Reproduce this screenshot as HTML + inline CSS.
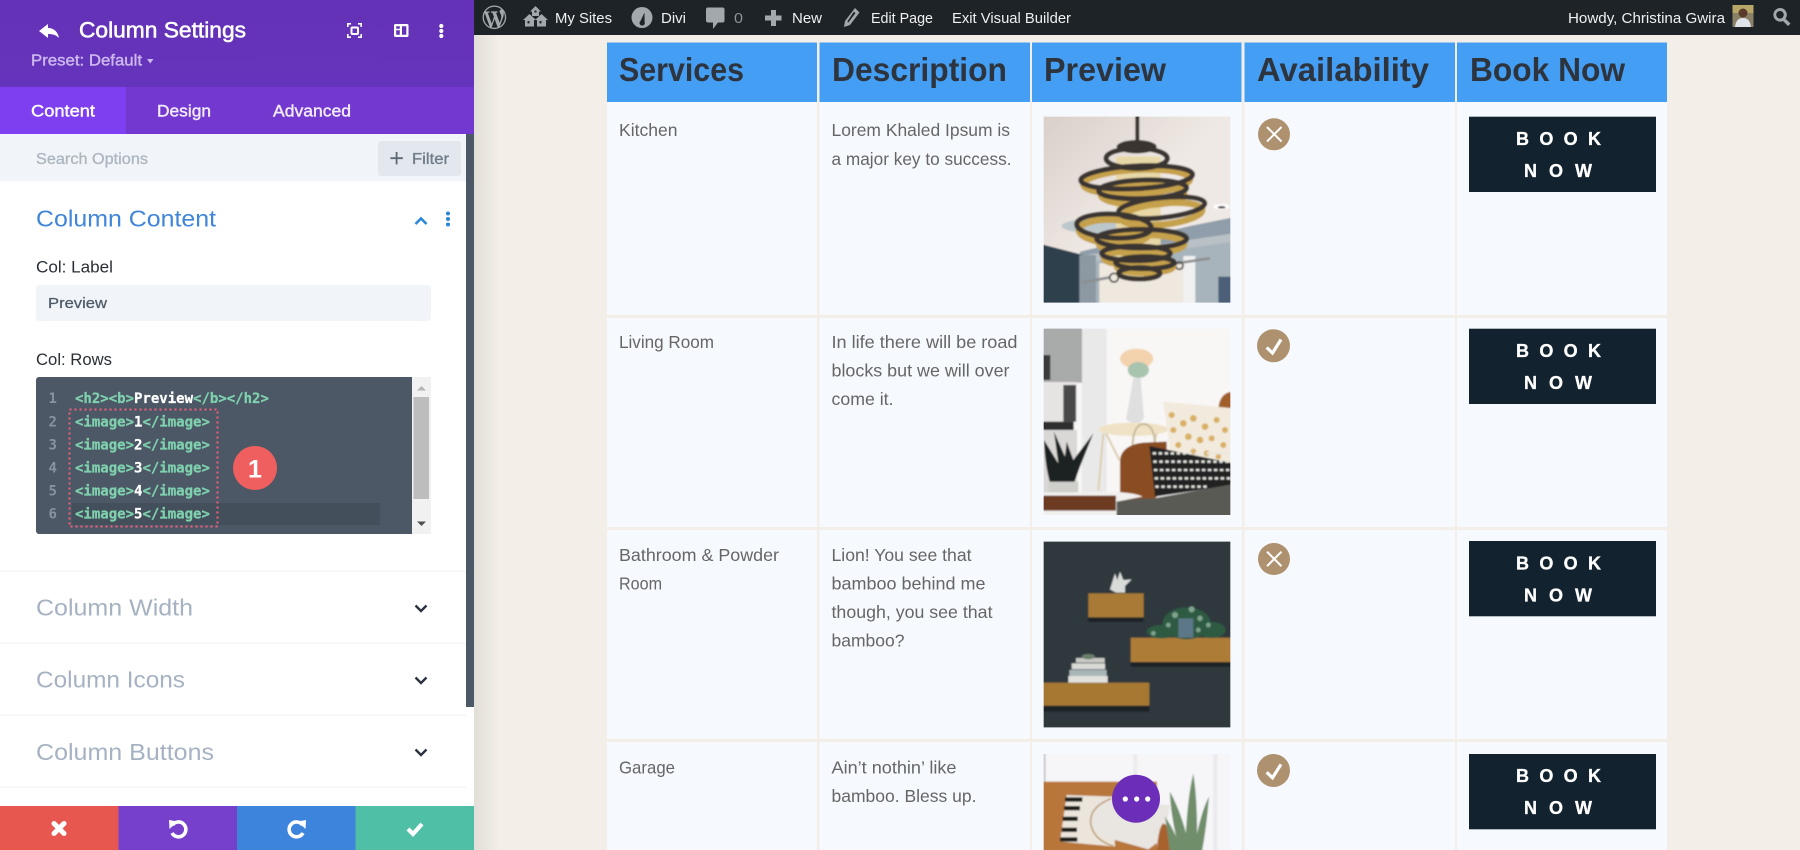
<!DOCTYPE html>
<html lang="en">
<head>
<meta charset="utf-8">
<title>Column Settings</title>
<style>
html,body{margin:0;padding:0;width:1800px;height:850px;overflow:hidden;background:#f3efe8}
svg{display:block}
text{font-family:"Liberation Sans",Arial,sans-serif}
.t{font-size:22.5px;fill:#fff;stroke:#fff;stroke-width:.55}
.tab{font-size:16.5px;fill:#fff;stroke:#fff;stroke-width:.4}
.sec{font-size:23.5px;fill:#a6b2c2}
.lab{font-size:16.5px;fill:#2a2f36}
.ab{font-size:14.5px;fill:#eef0f1}
.th{font-weight:bold;font-size:33px;fill:#2d343e}
.td{font-size:17.5px;fill:#666}
.bk{font-weight:bold;font-size:18px;fill:#fff;stroke:#fff;stroke-width:.3}
.code{font-family:"DejaVu Sans Mono","Liberation Mono",monospace;font-size:14px;font-weight:bold;fill:#7fd1ae;stroke:#7fd1ae;stroke-width:.25}
.code tspan{fill:#fff;stroke:#fff}
.ln{font-family:"DejaVu Sans Mono","Liberation Mono",monospace;font-size:14px;font-weight:bold;fill:#8793a3}
</style>
</head>
<body>
<svg xmlns="http://www.w3.org/2000/svg" width="1800" height="850" viewBox="0 0 1800 850">
<defs>
<linearGradient id="shadow" x1="0" x2="1" y1="0" y2="0"><stop offset="0" stop-color="#000" stop-opacity=".07"/><stop offset="1" stop-color="#000" stop-opacity="0"/></linearGradient>
<linearGradient id="hdr" x1="0" x2="0" y1="0" y2="1"><stop offset="0" stop-color="#6332b6"/><stop offset="1" stop-color="#6534bc"/></linearGradient>
<linearGradient id="wall" x1="0" x2="1" y1="0" y2="1"><stop offset="0" stop-color="#d9cfc9"/><stop offset=".5" stop-color="#efe9e5"/><stop offset="1" stop-color="#f0e8e4"/></linearGradient>
<filter id="soft" x="-30%" y="-30%" width="160%" height="160%"><feGaussianBlur stdDeviation="6"/></filter>
<filter id="img" x="-5%" y="-5%" width="110%" height="110%"><feGaussianBlur stdDeviation="2"/></filter>
<clipPath id="c1"><rect x="41" y="50" width="560" height="558"/></clipPath>
<clipPath id="c2"><rect x="41" y="26" width="560" height="559"/></clipPath>
<clipPath id="c3"><rect x="41" y="35" width="560" height="557"/></clipPath>
<clipPath id="c4"><rect x="41" y="42" width="560" height="288"/></clipPath>
</defs>

<!-- page -->
<rect width="1800" height="850" fill="#f3efe8"/>
<rect x="474" y="35" width="26" height="815" fill="url(#shadow)"/>

<!-- table header -->
<g fill="#449ff4">
<rect x="607" y="42.5" width="210" height="59.5"/><rect x="819.5" y="42.5" width="210.5" height="59.5"/><rect x="1032" y="42.5" width="209.5" height="59.5"/><rect x="1244.5" y="42.5" width="210.5" height="59.5"/><rect x="1457" y="42.5" width="210" height="59.5"/>
</g>
<text class="th" x="619" y="81" textLength="125" lengthAdjust="spacingAndGlyphs">Services</text>
<text class="th" x="832" y="81" textLength="175" lengthAdjust="spacingAndGlyphs">Description</text>
<text class="th" x="1044" y="81" textLength="122" lengthAdjust="spacingAndGlyphs">Preview</text>
<text class="th" x="1257" y="81" textLength="172" lengthAdjust="spacingAndGlyphs">Availability</text>
<text class="th" x="1470" y="81" textLength="155" lengthAdjust="spacingAndGlyphs">Book Now</text>

<!-- table rows -->
<g fill="#f6f9fd">
<rect x="607" y="102" width="210" height="213"/><rect x="819.5" y="102" width="210.5" height="213"/><rect x="1032" y="102" width="210" height="213"/><rect x="1244.5" y="102" width="210.5" height="213"/><rect x="1457" y="102" width="210" height="213"/>
<rect x="607" y="318" width="210" height="209"/><rect x="819.5" y="318" width="210.5" height="209"/><rect x="1032" y="318" width="210" height="209"/><rect x="1244.5" y="318" width="210.5" height="209"/><rect x="1457" y="318" width="210" height="209"/>
<rect x="607" y="530" width="210" height="209"/><rect x="819.5" y="530" width="210.5" height="209"/><rect x="1032" y="530" width="210" height="209"/><rect x="1244.5" y="530" width="210.5" height="209"/><rect x="1457" y="530" width="210" height="209"/>
<rect x="607" y="742" width="210" height="108"/><rect x="819.5" y="742" width="210.5" height="108"/><rect x="1032" y="742" width="210" height="108"/><rect x="1244.5" y="742" width="210.5" height="108"/><rect x="1457" y="742" width="210" height="108"/>
</g>

<text class="td" x="619" y="136" textLength="58.5" lengthAdjust="spacingAndGlyphs">Kitchen</text>
<text class="td" x="831.5" y="136" textLength="178.5" lengthAdjust="spacingAndGlyphs">Lorem Khaled Ipsum is</text>
<text class="td" x="831.5" y="165" textLength="180" lengthAdjust="spacingAndGlyphs">a major key to success.</text>

<text class="td" x="619" y="348" textLength="95" lengthAdjust="spacingAndGlyphs">Living Room</text>
<text class="td" x="831.5" y="348" textLength="186" lengthAdjust="spacingAndGlyphs">In life there will be road</text>
<text class="td" x="831.5" y="376.5" textLength="178" lengthAdjust="spacingAndGlyphs">blocks but we will over</text>
<text class="td" x="831.5" y="405" textLength="62" lengthAdjust="spacingAndGlyphs">come it.</text>

<text class="td" x="619" y="561" textLength="160" lengthAdjust="spacingAndGlyphs">Bathroom &amp; Powder</text>
<text class="td" x="619" y="589.5" textLength="43" lengthAdjust="spacingAndGlyphs">Room</text>
<text class="td" x="831.5" y="561" textLength="140" lengthAdjust="spacingAndGlyphs">Lion! You see that</text>
<text class="td" x="831.5" y="589.5" textLength="154" lengthAdjust="spacingAndGlyphs">bamboo behind me</text>
<text class="td" x="831.5" y="618" textLength="161" lengthAdjust="spacingAndGlyphs">though, you see that</text>
<text class="td" x="831.5" y="646.5" textLength="73" lengthAdjust="spacingAndGlyphs">bamboo?</text>

<text class="td" x="619" y="773.5" textLength="56" lengthAdjust="spacingAndGlyphs">Garage</text>
<text class="td" x="831.5" y="773.5" textLength="125" lengthAdjust="spacingAndGlyphs">Ain’t nothin’ like</text>
<text class="td" x="831.5" y="802" textLength="145" lengthAdjust="spacingAndGlyphs">bamboo. Bless up.</text>

<!-- image 1 chandelier -->
<g transform="translate(1030 100) scale(.33333)" clip-path="url(#c1)">
<g filter="url(#img)">
<rect x="31" y="40" width="580" height="578" fill="url(#wall)"/>
<ellipse cx="220" cy="378" rx="125" ry="24" fill="#bcc7cc"/>
<path d="M480 378 L610 352 V402 L150 468 V455Z" fill="#8f9eaa"/>
<path d="M150 468 L610 400 V430 L150 495Z" fill="#b9c1c6"/>
<path d="M150 490 L610 425 V618 H150Z" fill="#a8b4bc"/>
<path d="M31 432 L160 465 V618 H31Z" fill="#2f3f4b"/>
<rect x="148" y="465" width="50" height="153" fill="#8c99a3"/>
<rect x="208" y="490" width="255" height="128" fill="#efe8df"/>
<rect x="460" y="468" width="36" height="150" fill="#f0f1f0"/>
<rect x="565" y="530" width="46" height="88" fill="#4c6078"/>
<path d="M155 548 L240 532 M440 490 L540 475" stroke="#8d8f90" stroke-width="8" fill="none"/>
<circle cx="252" cy="533" r="13" fill="none" stroke="#444" stroke-width="5"/><circle cx="448" cy="497" r="11" fill="none" stroke="#444" stroke-width="5"/>
<ellipse cx="575" cy="320" rx="24" ry="8" fill="#fff"/><ellipse cx="575" cy="322" rx="12" ry="3.5" fill="#333"/>
<rect x="316" y="40" width="12" height="90" fill="#3a342f"/>
<path d="M258 170 H392 V530 H258Z" fill="#e8d8a8"/>
<g fill="none" stroke="#c6a14c" stroke-width="20">
<ellipse cx="320" cy="245" rx="160" ry="36" transform="rotate(-3 320 245)"/>
<ellipse cx="338" cy="285" rx="125" ry="30"/>
<ellipse cx="395" cy="342" rx="122" ry="32" transform="rotate(-6 395 342)"/>
<ellipse cx="252" cy="395" rx="105" ry="36" transform="rotate(3 252 395)"/>
<ellipse cx="335" cy="432" rx="128" ry="28"/>
<ellipse cx="318" cy="474" rx="96" ry="22"/>
<ellipse cx="345" cy="500" rx="84" ry="18"/>
</g>
<g fill="none" stroke="#3b3531" stroke-width="15">
<ellipse cx="320" cy="175" rx="92" ry="30"/>
<ellipse cx="320" cy="232" rx="168" ry="34" transform="rotate(-3 320 232)"/>
<ellipse cx="338" cy="268" rx="132" ry="28" transform="rotate(-2 338 268)"/>
<ellipse cx="395" cy="323" rx="130" ry="30" transform="rotate(-6 395 323)"/>
<ellipse cx="252" cy="378" rx="112" ry="36" transform="rotate(3 252 378)"/>
<ellipse cx="335" cy="416" rx="135" ry="28"/>
<ellipse cx="318" cy="460" rx="103" ry="22"/>
<ellipse cx="345" cy="488" rx="88" ry="18"/>
<ellipse cx="328" cy="520" rx="62" ry="17"/>
</g>
<ellipse cx="320" cy="140" rx="60" ry="20" fill="#3a3430"/>
</g>
</g>

<!-- image 2 living room -->
<g transform="translate(1030 320) scale(.33333)" clip-path="url(#c2)">
<g filter="url(#img)">
<rect x="31" y="16" width="580" height="579" fill="#f8f7f6"/>
<rect x="155" y="16" width="75" height="500" fill="#e9e9ea"/>
<rect x="31" y="16" width="125" height="172" fill="#a9abab"/>
<rect x="31" y="105" width="30" height="75" fill="#3a3a3a"/>
<rect x="31" y="186" width="110" height="120" fill="#e6e4e2"/>
<rect x="100" y="195" width="38" height="110" fill="#4a4a4a"/>
<rect x="31" y="305" width="100" height="25" fill="#2d2d2d"/>
<rect x="31" y="330" width="110" height="190" fill="#d9d8d6"/>
<path d="M42 360 L85 430 L72 335 L105 410 L110 365 L130 420 L190 340 L150 440 L130 495 H62 Q45 440 42 360Z" fill="#1f2220"/>
<rect x="55" y="485" width="90" height="32" fill="#cfcfcb"/>
<ellipse cx="320" cy="116" rx="50" ry="30" fill="#f3d3ad"/>
<ellipse cx="325" cy="150" rx="32" ry="24" fill="#a9c4ae"/>
<path d="M310 175 H332 L342 295 Q320 325 288 298Z" fill="#dfdfdf"/>
<ellipse cx="310" cy="328" rx="105" ry="20" fill="#efe2c6"/>
<path d="M220 340 L205 512 M228 340 L268 420 M380 340 L370 380" stroke="#dccfae" stroke-width="6" fill="none"/>
<path d="M308 375 Q310 312 342 312 Q372 315 375 370" stroke="#c8bb9a" stroke-width="6" fill="none"/>
<path d="M270 420 Q275 375 340 368 L410 365 V500 L370 540 H270Z" fill="#8a4d20"/>
<path d="M565 265 Q570 215 611 215 V265Z" fill="#a05e2c"/>
<path d="M400 245 L611 265 V432 L420 395Z" fill="#f2eadc"/>
<g fill="#d9b064">
<circle cx="425" cy="285" r="9"/><circle cx="460" cy="310" r="10"/><circle cx="490" cy="295" r="10"/><circle cx="525" cy="320" r="10"/><circle cx="560" cy="300" r="9"/><circle cx="585" cy="330" r="9"/><circle cx="430" cy="330" r="9"/><circle cx="475" cy="350" r="10"/><circle cx="510" cy="360" r="10"/><circle cx="545" cy="355" r="9"/><circle cx="580" cy="375" r="9"/><circle cx="445" cy="375" r="9"/><circle cx="490" cy="395" r="9"/><circle cx="530" cy="400" r="9"/><circle cx="565" cy="410" r="8"/>
</g>
<path d="M358 378 L611 430 V495 L375 530Z" fill="#222"/>
<g stroke="#e6e6e2" stroke-width="7" stroke-dasharray="10 8" fill="none">
<path d="M368 400 H611"/><path d="M370 425 H611"/><path d="M372 450 H611"/><path d="M374 475 H611"/><path d="M376 500 H530"/>
</g>
<path d="M258 545 Q300 535 370 535 L611 492 V595 H258Z" fill="#5a5a55"/>
<path d="M31 517 H150 Q300 510 338 530 L260 545 V595 H31Z" fill="#f2f0ee"/>
<path d="M31 527 H258 V572 H31Z" fill="#6d3a22"/>
</g>
</g>

<!-- image 3 shelves -->
<g transform="translate(1030 530) scale(.33333)" clip-path="url(#c3)">
<g filter="url(#img)">
<rect x="31" y="25" width="580" height="577" fill="#2e373c"/>
<rect x="175" y="262" width="165" height="14" fill="#1d2327"/>
<rect x="302" y="396" width="309" height="14" fill="#1d2327"/>
<rect x="31" y="527" width="327" height="18" fill="#1d2327"/>
<rect x="175" y="190" width="166" height="72" fill="#a87a35"/>
<rect x="302" y="323" width="309" height="73" fill="#ad7d38"/>
<rect x="31" y="458" width="327" height="69" fill="#a67832"/>
<path d="M240 178 L255 130 L262 150 L270 125 L280 150 L305 148 L285 168 V188 H258Z" fill="#d9dbd9"/>
<g fill="#2f5a43"><ellipse cx="470" cy="280" rx="72" ry="48"/><ellipse cx="395" cy="305" rx="45" ry="20"/><ellipse cx="545" cy="300" rx="42" ry="24"/></g>
<g fill="#7fa48d"><circle cx="435" cy="255" r="9"/><circle cx="485" cy="238" r="9"/><circle cx="510" cy="265" r="8"/><circle cx="370" cy="310" r="7"/><circle cx="535" cy="285" r="7"/><circle cx="415" cy="285" r="7"/><circle cx="505" cy="300" r="7"/></g>
<rect x="445" y="265" width="45" height="58" fill="#5c7788"/>
<rect x="125" y="400" width="100" height="18" fill="#d9d9d6"/>
<rect x="118" y="420" width="112" height="18" fill="#a9b6b8"/>
<rect x="115" y="438" width="118" height="20" fill="#e1e2dc"/>
<rect x="138" y="384" width="86" height="14" fill="#c9c9c4"/>
<ellipse cx="175" cy="380" rx="20" ry="8" fill="#6a7f6e"/>
</g>
</g>

<!-- image 4 sofa -->
<g transform="translate(1030 740) scale(.33333)" clip-path="url(#c4)">
<g filter="url(#img)">
<rect x="31" y="32" width="580" height="308" fill="#f6f5f8"/>
<rect x="31" y="32" width="16" height="98" fill="#cdcdcf"/>
<rect x="310" y="32" width="12" height="140" fill="#ececee"/>
<rect x="550" y="32" width="12" height="308" fill="#eaeaee"/>
<rect x="31" y="125" width="350" height="215" fill="#b8763a"/>
<path d="M110 165 L250 170 L255 320 L90 305Z" fill="#ebe5dc"/>
<g fill="#1c1a18"><rect x="105" y="172" width="52" height="13"/><rect x="102" y="198" width="48" height="13"/><rect x="98" y="230" width="45" height="13"/><rect x="95" y="263" width="46" height="13"/><rect x="90" y="292" width="52" height="13"/></g>
<path d="M205 180 Q250 170 300 190 L420 195 L405 290 L355 328 L255 300 Q185 280 180 235 Q185 195 205 180Z" fill="#e9e5e1"/>
<path d="M245 175 Q178 200 182 250 Q190 300 250 318" fill="none" stroke="#b9935f" stroke-width="4"/>
<path d="M380 340 Q385 260 400 250 Q440 270 455 340Z" fill="#a8622e"/>
<g fill="#6f8e6a">
<path d="M465 340 Q470 180 490 100 Q505 200 500 340Z"/>
<path d="M450 340 Q420 220 420 155 Q465 240 480 340Z"/>
<path d="M490 340 Q510 220 537 170 Q530 260 515 340Z"/>
<path d="M420 340 Q410 260 405 230 Q440 280 455 340Z"/>
</g>
</g>
</g>

<!-- availability icons -->
<g fill="#ae916f">
<circle cx="1274" cy="134.3" r="16"/><circle cx="1273.5" cy="345.7" r="16.5"/><circle cx="1274" cy="559" r="16"/><circle cx="1273.5" cy="770.5" r="16.5"/>
</g>
<g fill="none" stroke="#fff" stroke-width="2">
<path d="M1267 127 L1281.5 141.5 M1281.5 127 L1267 141.5"/>
<path d="M1267 551.7 L1281.5 566.2 M1281.5 551.7 L1267 566.2"/>
</g>
<g fill="none" stroke="#fff" stroke-width="3.2">
<path d="M1266.7 347.5 L1272.5 353 L1281 339.5"/>
<path d="M1266.7 772.3 L1272.5 777.8 L1281 764.3"/>
</g>

<!-- buttons -->
<g fill="#12222e">
<rect x="1469" y="116.7" width="187" height="75.3"/>
<rect x="1469" y="328.7" width="187" height="75.3"/>
<rect x="1469" y="541" width="187" height="75.3"/>
<rect x="1469" y="754" width="187" height="75.3"/>
</g>
<g>
<text class="bk" x="1516" y="145" textLength="85" lengthAdjust="spacing">BOOK</text><text class="bk" x="1524" y="177" textLength="68" lengthAdjust="spacing">NOW</text>
<text class="bk" x="1516" y="357" textLength="85" lengthAdjust="spacing">BOOK</text><text class="bk" x="1524" y="389" textLength="68" lengthAdjust="spacing">NOW</text>
<text class="bk" x="1516" y="569.5" textLength="85" lengthAdjust="spacing">BOOK</text><text class="bk" x="1524" y="601.5" textLength="68" lengthAdjust="spacing">NOW</text>
<text class="bk" x="1516" y="782" textLength="85" lengthAdjust="spacing">BOOK</text><text class="bk" x="1524" y="814" textLength="68" lengthAdjust="spacing">NOW</text>
</g>

<!-- fab -->
<circle cx="1136" cy="798.7" r="24" fill="#6c2eb9"/>
<g fill="#fff"><circle cx="1125.3" cy="799" r="2.6"/><circle cx="1136.7" cy="799" r="2.6"/><circle cx="1147.7" cy="799" r="2.6"/></g>

<!-- admin bar -->
<rect x="474" y="0" width="1326" height="35" fill="#1e2327"/>
<g fill="#a3a8ac">
<path transform="translate(482.6 5.5) scale(1.18)" d="M20 10c0-5.51-4.49-10-10-10C4.48 0 0 4.49 0 10c0 5.52 4.48 10 10 10 5.51 0 10-4.48 10-10zM7.78 15.37L4.37 6.22c.55-.02 1.17-.08 1.17-.08.5-.06.44-1.13-.06-1.11 0 0-1.45.11-2.37.11-.18 0-.37 0-.58-.01C4.12 2.69 6.87 1.11 10 1.11c2.33 0 4.45.87 6.05 2.34-.68-.11-1.65.39-1.65 1.58 0 .74.45 1.36.9 2.1.35.61.55 1.36.55 2.46 0 1.49-1.4 5-1.4 5l-3.03-8.37c.54-.02.82-.17.82-.17.5-.05.44-1.25-.06-1.22 0 0-1.44.12-2.38.12-.87 0-2.33-.12-2.33-.12-.5-.03-.56 1.2-.06 1.22l.92.08 1.26 3.41zM17.41 10c.24-.64.74-1.87.43-4.25.7 1.29 1.05 2.71 1.05 4.25 0 3.29-1.73 6.24-4.4 7.78.97-2.59 1.94-5.2 2.92-7.78zM6.1 18.09C3.12 16.65 1.11 13.53 1.11 10c0-1.3.23-2.48.72-3.59C3.25 10.3 4.67 14.2 6.1 18.09zm4.03-6.63l2.58 6.98c-.86.29-1.76.45-2.71.45-.79 0-1.57-.11-2.29-.33.81-2.38 1.62-4.74 2.42-7.1z"/>
<!-- my sites -->
<path fill-rule="evenodd" d="M535.5 6 L541 11.5 H539 V16 H532 V11.5 H530Z M534.5 10.5 v2 h2 v-2Z"/>
<path fill-rule="evenodd" d="M529.5 14 L536 20 H534 V26.5 H525 V20 H523Z M527.5 21 v2.4 h2 v-2.4Z"/>
<path fill-rule="evenodd" d="M541.5 14 L548 20 H546 V26.5 H537 V20 H535Z M539.5 21 v2.4 h2 v-2.4Z"/>
<!-- gauge -->
<path fill-rule="evenodd" d="M642 7 A10.5 10.5 0 1 1 642 28 A10.5 10.5 0 1 1 642 7Z M644.5 12.5 L640.5 21 A2.6 2.6 0 1 0 644.6 22Z"/>
<!-- comment -->
<path d="M708 7.5 H722.5 A2 2 0 0 1 724.5 9.5 V20.5 A2 2 0 0 1 722.5 22.5 H718 L713 29 V22.5 H708 A2 2 0 0 1 706 20.5 V9.5 A2 2 0 0 1 708 7.5Z"/>
<!-- plus -->
<path d="M771 10 H776 V15.5 H781.5 V20.5 H776 V26 H771 V20.5 H765 V15.5 H771Z"/>
<!-- pencil -->
<path fill-rule="evenodd" d="M855 8 L859.5 12.5 L850 25 L844 27 L845 21Z M853.8 11.8 L847.3 21.5 L848.4 22.5 L855.5 13Z"/>
<!-- search -->
<path d="M1780 8 A6.8 6.8 0 0 1 1785.5 18.8 L1790.5 23.5 L1788 26 L1783 21 A6.8 6.8 0 1 1 1780 8Z M1780 11 A3.8 3.8 0 1 0 1780 18.6 A3.8 3.8 0 0 0 1780 11Z" fill-rule="evenodd"/>
</g>
<text class="ab" x="555" y="23" textLength="57" lengthAdjust="spacingAndGlyphs">My Sites</text>
<text class="ab" x="661" y="23" textLength="25" lengthAdjust="spacingAndGlyphs">Divi</text>
<text class="ab" x="734" y="23" textLength="9" lengthAdjust="spacingAndGlyphs" style="fill:#8e9398">0</text>
<text class="ab" x="792" y="23" textLength="30" lengthAdjust="spacingAndGlyphs">New</text>
<text class="ab" x="871" y="23" textLength="62" lengthAdjust="spacingAndGlyphs">Edit Page</text>
<text class="ab" x="952" y="23" textLength="119" lengthAdjust="spacingAndGlyphs">Exit Visual Builder</text>
<text class="ab" x="1568" y="23" textLength="157" lengthAdjust="spacingAndGlyphs">Howdy, Christina Gwira</text>
<rect x="1732.5" y="5" width="21" height="22" fill="#8b8068"/>
<rect x="1732.5" y="5" width="21" height="8" fill="#b9a76a"/>
<circle cx="1743" cy="13" r="4.5" fill="#5a3a2a"/>
<path d="M1735 27 Q1736 18 1743 18 Q1750 18 1751 27Z" fill="#dfe3ea"/>

<!-- sidebar -->
<rect x="0" y="0" width="474" height="850" fill="#fff"/>
<rect x="0" y="0" width="474" height="87" fill="url(#hdr)"/>
<path fill="#fff" d="M48 24 L39 31 L48 38 V34 C53 34 56 35 59 38 C58 32 54 28 48 28Z"/>
<text class="t" x="79" y="37.5" textLength="167" lengthAdjust="spacingAndGlyphs">Column Settings</text>
<text x="31" y="65.5" textLength="111" lengthAdjust="spacingAndGlyphs" style="font-size:16px;fill:#cdb9ee;stroke:#cdb9ee;stroke-width:.4">Preset: Default</text>
<path d="M147 59 H153.5 L150.2 63.5Z" fill="#cdb9ee"/>
<g fill="none" stroke="#fff" stroke-width="1.6">
<path d="M347.8 27 V23.8 H351 M358 23.8 H361.2 V27 M361.2 34 V37.2 H358 M351 37.2 H347.8 V34"/>
</g>
<rect x="351.5" y="27.5" width="6.5" height="6.5" rx="1" fill="none" stroke="#fff" stroke-width="2"/>
<path fill="#fff" fill-rule="evenodd" d="M395.5 24 H407 A1.5 1.5 0 0 1 408.5 25.5 V35.5 A1.5 1.5 0 0 1 407 37 H395.5 A1.5 1.5 0 0 1 394 35.5 V25.5 A1.5 1.5 0 0 1 395.5 24Z M396.2 26.2 V28.8 H399.8 V26.2Z M396.2 30.2 V34.8 H399.8 V30.2Z M402 26.2 V34.8 H406.3 V26.2Z"/>
<g fill="#fff"><circle cx="441.3" cy="26" r="2.1"/><circle cx="441.3" cy="31" r="2.1"/><circle cx="441.3" cy="36" r="2.1"/></g>

<rect x="0" y="87" width="474" height="47" fill="#7238cf"/>
<rect x="0" y="87" width="126" height="47" fill="#7e3ff0"/>
<text class="tab" x="31" y="116.5" textLength="64" lengthAdjust="spacingAndGlyphs">Content</text>
<text class="tab" x="157" y="116.5" textLength="54" lengthAdjust="spacingAndGlyphs" style="fill:#f2ebfb;stroke:#f2ebfb">Design</text>
<text class="tab" x="273" y="116.5" textLength="78" lengthAdjust="spacingAndGlyphs" style="fill:#f2ebfb;stroke:#f2ebfb">Advanced</text>

<rect x="0" y="134" width="466" height="47.5" fill="#f1f5f9"/>
<text x="36" y="164" textLength="112" lengthAdjust="spacingAndGlyphs" style="font-size:15.5px;fill:#aeb6c0;stroke:#aeb6c0;stroke-width:.35">Search Options</text>
<rect x="378" y="141" width="83" height="35" rx="3" fill="#e3e8ee"/>
<path d="M395.7 152 h1.8 v5.3 h5.3 v1.8 h-5.3 v5.3 h-1.8 v-5.3 h-5.3 v-1.8 h5.3Z" fill="#5d6875"/>
<text x="412" y="164" textLength="37" lengthAdjust="spacingAndGlyphs" style="font-size:15.5px;fill:#717c89;stroke:#717c89;stroke-width:.35">Filter</text>

<text class="sec" x="36" y="226.5" textLength="180" lengthAdjust="spacingAndGlyphs" style="fill:#3f85d8">Column Content</text>
<path d="M415.5 224 L421 218.5 L426.5 224" fill="none" stroke="#2b87da" stroke-width="2.6"/>
<g fill="#2b87da"><circle cx="448" cy="213.5" r="2"/><circle cx="448" cy="219" r="2"/><circle cx="448" cy="224.5" r="2"/></g>

<text class="lab" x="36" y="272.5" textLength="77" lengthAdjust="spacingAndGlyphs">Col: Label</text>
<rect x="36" y="285" width="395" height="36" rx="3" fill="#f1f5f9"/>
<text x="48" y="308" textLength="59" lengthAdjust="spacingAndGlyphs" style="font-size:15px;fill:#4f5b69;stroke:#4f5b69;stroke-width:.25">Preview</text>

<text class="lab" x="36" y="365" textLength="76" lengthAdjust="spacingAndGlyphs">Col: Rows</text>

<!-- editor -->
<path d="M39 377 H412 V534 H39 A3 3 0 0 1 36 531 V380 A3 3 0 0 1 39 377Z" fill="#4c5866"/>
<rect x="412" y="377" width="19" height="157" fill="#f1f1f1"/>
<rect x="413.5" y="397" width="15.5" height="102" fill="#bdbdbd"/>
<path d="M417 390.5 L421.5 386 L426 390.5Z" fill="#b4b4b4"/>
<path d="M417 521.5 H426 L421.5 526Z" fill="#505050"/>
<rect x="72" y="503" width="308" height="22" fill="#444f5c"/>
<text class="ln" x="48.5" y="403">1</text><text class="ln" x="48.5" y="426.5">2</text><text class="ln" x="48.5" y="449.5">3</text><text class="ln" x="48.5" y="472.5">4</text><text class="ln" x="48.5" y="495.5">5</text><text class="ln" x="48.5" y="518.5">6</text>
<text class="code" x="75" y="403">&lt;h2&gt;&lt;b&gt;<tspan>Preview</tspan>&lt;/b&gt;&lt;/h2&gt;</text>
<text class="code" x="75" y="426.5">&lt;image&gt;<tspan>1</tspan>&lt;/image&gt;</text>
<text class="code" x="75" y="449.5">&lt;image&gt;<tspan>2</tspan>&lt;/image&gt;</text>
<text class="code" x="75" y="472.5">&lt;image&gt;<tspan>3</tspan>&lt;/image&gt;</text>
<text class="code" x="75" y="495.5">&lt;image&gt;<tspan>4</tspan>&lt;/image&gt;</text>
<text class="code" x="75" y="518.5">&lt;image&gt;<tspan>5</tspan>&lt;/image&gt;</text>
<rect x="69.5" y="409.5" width="148" height="117" fill="none" stroke="#f2607a" stroke-width="2" stroke-dasharray="2 3"/>
<circle cx="255" cy="468" r="22" fill="#f05f5f"/>
<text x="255" y="477.5" text-anchor="middle" style="font-size:25px;font-weight:bold;fill:#fff">1</text>

<!-- sections -->
<g fill="#f4f6f8">
<rect x="0" y="570.5" width="466" height="1.5"/><rect x="0" y="642.5" width="466" height="1.5"/><rect x="0" y="714.5" width="466" height="1.5"/><rect x="0" y="786.5" width="466" height="1.5"/>
</g>
<text class="sec" x="36" y="615.5" textLength="157" lengthAdjust="spacingAndGlyphs">Column Width</text>
<text class="sec" x="36" y="687.5" textLength="149" lengthAdjust="spacingAndGlyphs">Column Icons</text>
<text class="sec" x="36" y="760" textLength="178" lengthAdjust="spacingAndGlyphs">Column Buttons</text>
<g fill="none" stroke="#2b3440" stroke-width="2.4">
<path d="M415.5 605.5 L421 611 L426.5 605.5"/><path d="M415.5 677.5 L421 683 L426.5 677.5"/><path d="M415.5 749.5 L421 755 L426.5 749.5"/>
</g>

<!-- scrollbar -->
<rect x="466" y="134" width="8" height="573" fill="#4c5866"/>

<!-- footer -->
<rect x="0" y="806" width="118.5" height="44" fill="#e8574f"/>
<rect x="118.5" y="806" width="118.5" height="44" fill="#7640cc"/>
<rect x="237" y="806" width="118.5" height="44" fill="#3d84dc"/>
<rect x="355.5" y="806" width="118.5" height="44" fill="#4fc0a5"/>
<path d="M54 823.5 L64 833.5 M64 823.5 L54 833.5" stroke="#fff" stroke-width="5" stroke-linecap="round"/>
<path d="M172.5 825 A7.4 7.4 0 1 1 172 833" fill="none" stroke="#fff" stroke-width="3.6"/>
<path d="M169 820 L177.5 821.5 L169.5 829Z" fill="#fff"/>
<path d="M302.5 825 A7.4 7.4 0 1 0 303 833" fill="none" stroke="#fff" stroke-width="3.6"/>
<path d="M306 820 L297.5 821.5 L305.5 829Z" fill="#fff"/>
<path d="M408 829 L413 834 L422 824" fill="none" stroke="#fff" stroke-width="4.2"/>
</svg>
</body>
</html>
